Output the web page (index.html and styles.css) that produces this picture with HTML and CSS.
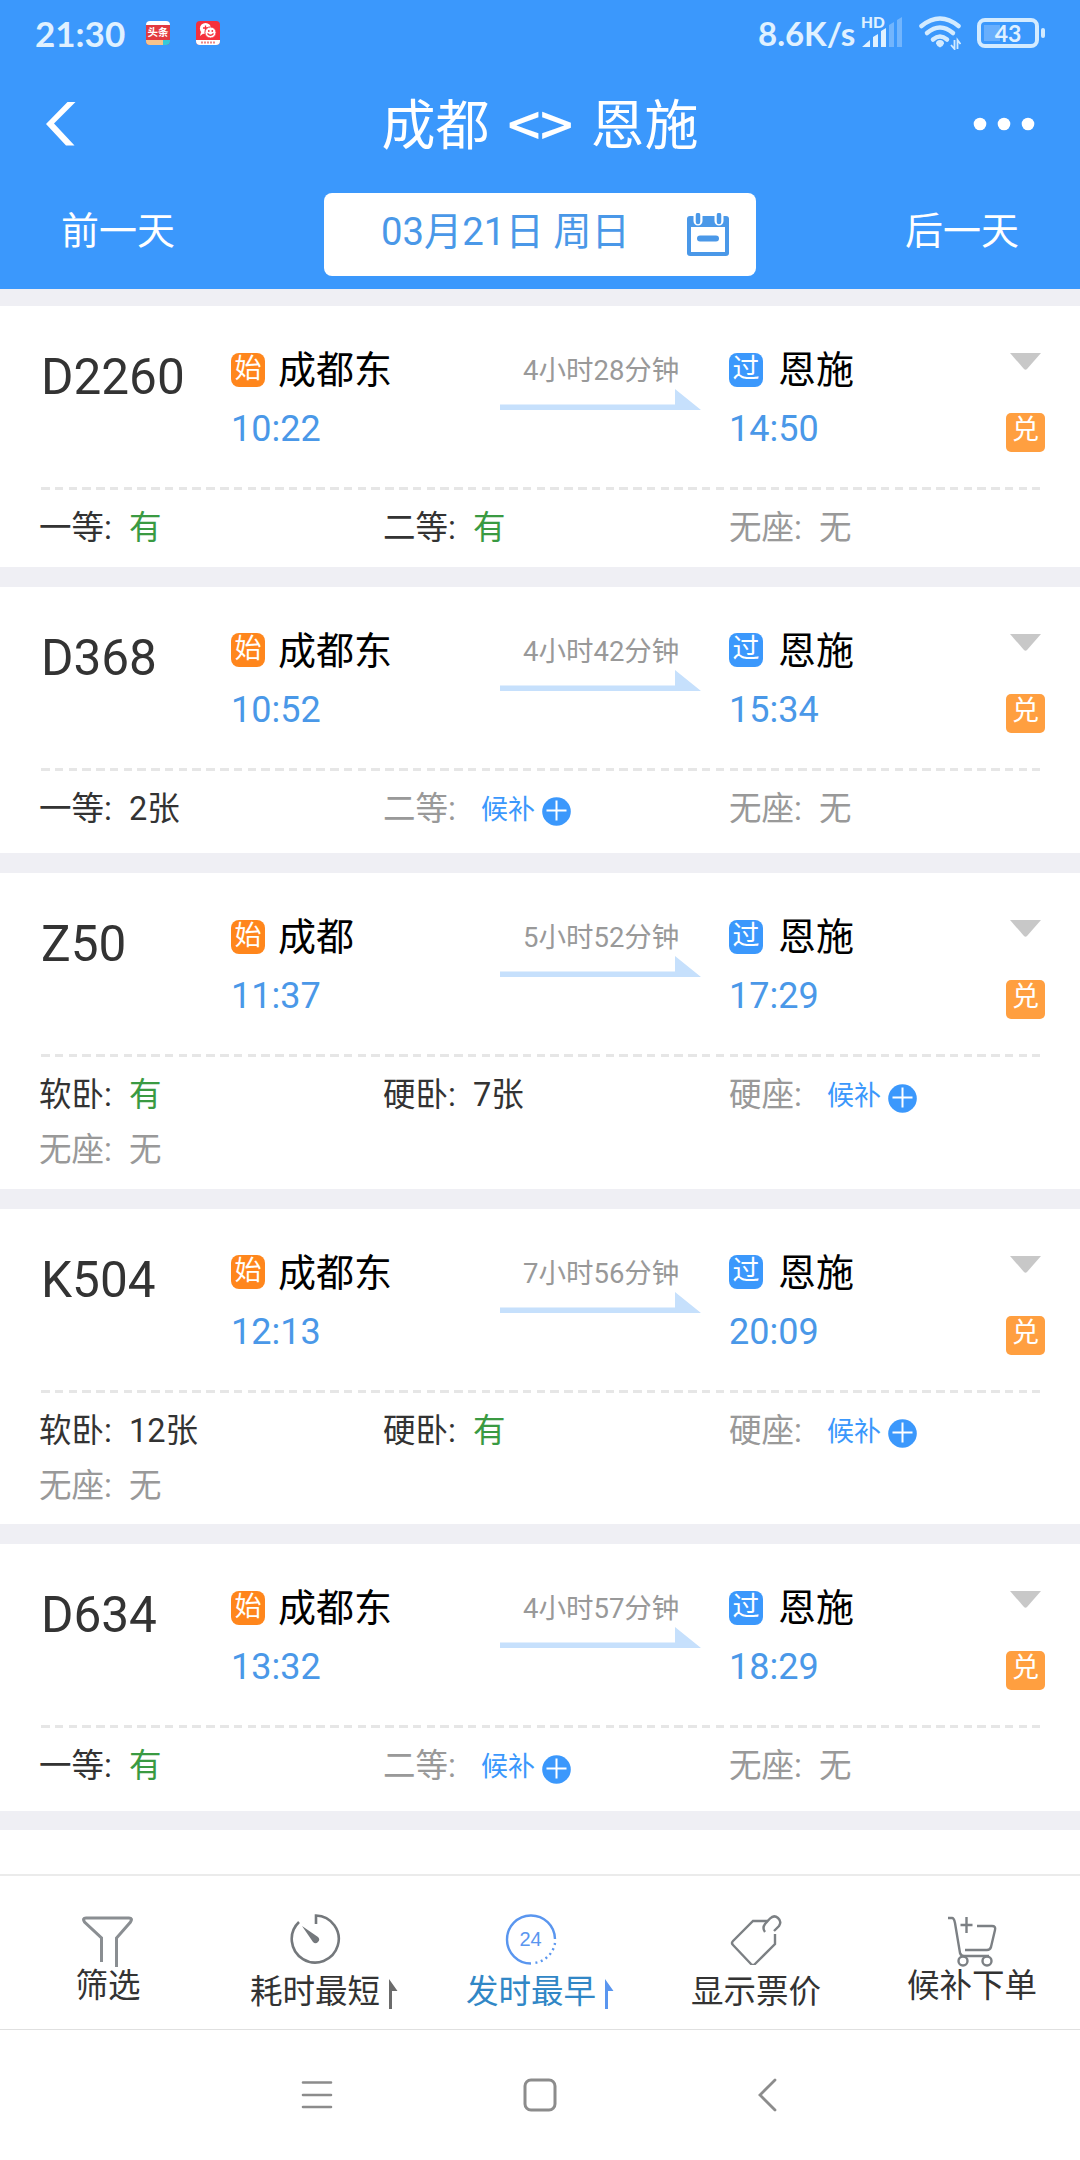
FILE: index.html
```html
<!DOCTYPE html>
<html lang="zh-CN">
<head>
  <meta charset="UTF-8">
  <meta name="viewport" content="width=device-width, initial-scale=1.0">
  <title>成都 - 恩施</title>
  <link rel="stylesheet" href="styles.css">
</head>
<body>

  <header class="header">
    <!-- status bar -->
    <div class="status">
      <span class="clock">21:30</span>
      <span class="app app-news"><b>头条</b><i></i></span>
      <span class="app app-chat">
        <svg width="24" height="24" viewBox="0 0 24 24">
          <rect y="19" width="24" height="5" fill="#fff"/>
          <circle cx="9.500" cy="7.500" r="5.600" fill="#fff"/>
          <path d="M5 11l-1 4 4-3z" fill="#fff"/>
          <path d="M9.500 4.500v5M7 7h5" stroke="#f5303c" stroke-width="1.300"/>
          <circle cx="14.500" cy="11.500" r="5.600" fill="#fff" stroke="#f5303c" stroke-width="1"/>
          <path d="M11.500 12.500q3 3.500 6 0" fill="none" stroke="#f5303c" stroke-width="1.300"/>
          <circle cx="12.800" cy="10" r=".9" fill="#f5303c"/>
          <circle cx="16.300" cy="10" r=".9" fill="#f5303c"/>
          <path d="M5 21.500h14" stroke="#e88" stroke-width="2" stroke-dasharray="2 1"/>
        </svg>
      </span>
      <span class="speed">8.6K/s</span>
      <span class="signal">
        <b>HD</b>
        <svg width="42" height="32" viewBox="0 0 42 32">
          <path d="M0 30l8-7v7zM11 20l5-3v13h-5zM19 14l5-3v19h-5z" fill="#e0f1ff"/>
          <path d="M27 8l5-3v25h-5zM35 3l5-3v30h-5z" fill="#72b5fd"/>
        </svg>
      </span>
      <svg class="wifi" width="42" height="34" viewBox="0 0 42 34">
        <g fill="none" stroke="#d3ebff" stroke-width="4.500" stroke-linecap="round">
          <path d="M2.500 10q18.500-15 37 0"/>
          <path d="M8 17q13-11 26 0"/>
          <path d="M14 23.500q7-6 14 0"/>
        </g>
        <path d="M17 27.500a4 3.500 0 0 1 8 0q-1 3-4 4-3-1-4-4z" fill="#d3ebff"/>
        <path d="M35.500 24v9l-3.500-4M38.500 33v-9l3 4" fill="none" stroke="#d3ebff" stroke-width="1.800"/>
      </svg>
      <span class="battery">43</span>
    </div>

    <div class="title-bar">
      <svg width="30" height="44" viewBox="0 0 30 44"><path d="M21.500 0h8L8 21.500 28.500 43.500H20L0 22z" fill="#fff"/></svg>
      <h1>成都<span>&lt;&gt;</span>恩施</h1>
      <svg width="62" height="14" viewBox="0 0 62 14" fill="#fff"><circle cx="7" cy="7" r="6.300"/><circle cx="31" cy="7" r="6.300"/><circle cx="55" cy="7" r="6.300"/></svg>
    </div>

    <div class="date-bar">
      <a class="day">前一天</a>
      <div class="date-box">
        <span>03月21日 周日</span>
        <svg width="42" height="43" viewBox="0 0 42 43">
          <path d="M3 3h36q3 0 3 3v34q0 3-3 3H3q-3 0-3-3V6q0-3 3-3z" fill="#4a98e8"/>
          <path d="M4 14h34v25H4z" fill="#fff"/>
          <path d="M11 0v8M32 0v8" stroke="#fff" stroke-width="9" stroke-linecap="round"/>
          <path d="M11 2v7M32 2v7" stroke="#4a98e8" stroke-width="4.500" stroke-linecap="round"/>
          <path d="M13 25.500h16" stroke="#4a98e8" stroke-width="6" stroke-linecap="round"/>
        </svg>
      </div>
      <a class="day">后一天</a>
    </div>
  </header>

  <main class="list" id="list"></main>

  <nav class="tabs">
    <div class="tab">
      <svg width="52" height="52" viewBox="0 0 52 52" fill="none" stroke="#8a8e92" stroke-width="3">
        <path d="M19.500 47V23L2.500 7Q0 3 4 3h43q4 0 1.500 4L34.500 23v29"/>
      </svg>
      <span>筛选</span>
    </div>
    <div class="tab tab-low">
      <div class="tab-sort">
        <svg width="52" height="52" viewBox="0 0 52 52" fill="none" stroke="#74787c" stroke-width="2.600">
          <path d="M27 11V2.500A23.500 23.500 0 1 1 10 9"/>
          <path d="M13 13l16 11a3.500 3.500 0 1 1-5 5z" fill="#74787c" stroke="none"/>
        </svg>
        <span>耗时最短</span>
      </div>
      <svg class="flag" width="9" height="30" viewBox="0 0 9 30" fill="#6b6b6b"><path d="M0 0l8.500 12H3v18H0z"/></svg>
    </div>
    <div class="tab tab-low active">
      <div class="tab-sort">
        <svg width="52" height="52" viewBox="0 0 52 52" fill="none" stroke="#5a96ef" stroke-width="2.400">
          <path d="M26 50.500A24 24 0 1 1 50 26"/>
          <path d="M50 30A24 24 0 0 1 29 50" stroke-dasharray="2 3.500"/>
          <text class="day-hours" x="25.500" y="33" text-anchor="middle">24</text>
        </svg>
        <span>发时最早</span>
      </div>
      <svg class="flag" width="9" height="30" viewBox="0 0 9 30" fill="#5a96ef"><path d="M0 0l8.500 12H3v18H0z"/></svg>
    </div>
    <div class="tab tab-low">
      <svg width="52" height="52" viewBox="0 0 52 52" fill="none" stroke="#7c8084" stroke-width="2.400">
        <path d="M38 8H23L3 28q-2 2 0 4l18 19q2 2 4 0l20-20V21"/>
        <path d="M35 19q-3-4 0-8l5-5.500q4-4 8-.5t1 8l-5 5"/>
      </svg>
      <span>显示票价</span>
    </div>
    <div class="tab">
      <svg width="52" height="52" viewBox="0 0 52 52" fill="none" stroke="#7c8084" stroke-width="2.400">
        <path d="M2 3h4q2 0 3 5l5 30q1 3 4 3h25"/>
        <path d="M31 11h15q4 0 3 4l-4 17q-1 3-4 3H19"/>
        <path d="M20.500 2v16M14.500 10h12"/>
        <circle cx="17" cy="46" r="4.500"/><circle cx="41" cy="46" r="4.500"/>
      </svg>
      <span>候补下单</span>
    </div>
  </nav>

  <footer class="sysnav">
    <svg width="32" height="34" viewBox="0 0 32 34" fill="none" stroke="#8c8c8c" stroke-width="2.600" stroke-linecap="round"><path d="M2 4.500h28M2 17h28M2 29h28"/></svg>
    <svg width="34" height="34" viewBox="0 0 34 34" fill="none" stroke="#8c8c8c" stroke-width="3"><rect x="2" y="2" width="30" height="30" rx="6"/></svg>
    <svg class="sys-back" width="22" height="34" viewBox="0 0 22 34" fill="none" stroke="#8c8c8c" stroke-width="2.800" stroke-linecap="round"><path d="M18 2L3 17l15 15"/></svg>
  </footer>

  <script>
    const trains = [
      { no: "D2260", from: "成都东", dep: "10:22", time: "4小时28分钟", arr: "14:50", seats: [["一等", "有"], ["二等", "有"], ["无座", "无"]] },
      { no: "D368", from: "成都东", dep: "10:52", time: "4小时42分钟", arr: "15:34", seats: [["一等", "2张"], ["二等", "候补"], ["无座", "无"]] },
      { no: "Z50", from: "成都", dep: "11:37", time: "5小时52分钟", arr: "17:29", seats: [["软卧", "有"], ["硬卧", "7张"], ["硬座", "候补"], ["无座", "无"]] },
      { no: "K504", from: "成都东", dep: "12:13", time: "7小时56分钟", arr: "20:09", seats: [["软卧", "12张"], ["硬卧", "有"], ["硬座", "候补"], ["无座", "无"]] },
      { no: "D634", from: "成都东", dep: "13:32", time: "4小时57分钟", arr: "18:29", seats: [["一等", "有"], ["二等", "候补"], ["无座", "无"]] }
    ];

    const plus = '<svg width="29" height="29" viewBox="0 0 29 29"><circle cx="14.500" cy="14.500" r="14.300" fill="#3b98fc"/><path d="M14.500 3.500v20M4.500 13.500h20" stroke="#fff" stroke-width="2"/></svg>';

    function seat([name, value]) {
      let cls = "";
      if (value === "有") cls = "yes";
      if (value === "无") cls = "none";
      if (value === "候补") cls = "none wait";
      return `<div class="seat ${cls}"><span class="label">${name}:</span><span class="value">${value}</span>${value === "候补" ? plus : ""}</div>`;
    }

    // a single row with a waitlist button is a little taller
    function isTall(seats) {
      return seats.length < 4 && seats.some(s => s[1] === "候补");
    }

    document.getElementById("list").innerHTML = trains.map(t => `
      <section class="card">
        <div class="info">
          <div class="no">${t.no}</div>
          <div class="stop">
            <div class="station"><span class="badge start">始</span>${t.from}</div>
            <div class="time">${t.dep}</div>
          </div>
          <div class="duration">
            <span>${t.time}</span>
            <svg width="201" height="22" viewBox="0 0 201 22"><path d="M0 15.500h175V0l26 21H0z" fill="#c6e0fc"/></svg>
          </div>
          <div class="stop">
            <div class="station"><span class="badge pass">过</span>恩施</div>
            <div class="time">${t.arr}</div>
          </div>
          <div class="side">
            <svg width="31" height="18" viewBox="0 0 31 18"><path d="M0 0h31L17 16q-1.500 1.500-3 0z" fill="#c8c8c8"/></svg>
            <span class="redeem">兑</span>
          </div>
        </div>
        <div class="seats${isTall(t.seats) ? " tall" : ""}">${t.seats.map(seat).join("")}</div>
      </section>`).join("");
  </script>

</body>
</html>
```

FILE: styles.css
```css
* {
  box-sizing: border-box;
}

body {
  margin: 0;
  height: 2160px;
  display: flex;
  flex-direction: column;
  overflow: hidden;
  background: #fff;
  font-family: Roboto, "Noto Sans CJK SC", sans-serif;
  color: #333;
}

svg {
  display: block;
  flex: none;
}

/* header */
.header {
  height: 289px;
  flex: none;
  background: #3b98fc;
  color: #fff;
}

.status {
  height: 66px;
  padding: 0 35px;
  display: flex;
  align-items: center;
  font-family: Lato, sans-serif;
  font-weight: 700;
  color: #e0f1ff;
}

.clock {
  width: 111px;
  font-size: 35px;
}

.app {
  width: 24px;
  height: 24px;
  margin-right: 26px;
  border-radius: 4px;
  overflow: hidden;
  background: #f5303c;
}

.app-news {
  display: flex;
  flex-direction: column;
  justify-content: space-between;
  border-top: 4px solid #fff;
  background: #e23a40;
}

.app-news b {
  font: 700 10.500px/14px "Noto Sans CJK SC", sans-serif;
  text-align: center;
  color: #fff;
}

.app-news i {
  height: 5px;
  background: linear-gradient(90deg, #f7c48c 70%, #35c9d8 70%);
}

.speed {
  margin-left: auto;
  font-size: 33px;
  width: 104px;
}

.signal {
  position: relative;
  width: 57px;
}

.signal b {
  position: absolute;
  top: -4px;
  left: -1px;
  font-size: 15.500px;
  line-height: 18px;
}

.battery {
  position: relative;
  width: 62px;
  height: 30px;
  margin: 0 6px 0 16px;
  border: 4px solid #d3ebff;
  border-radius: 8px;
  background: linear-gradient(#68affd, #68affd) 3px 3px / 16px 16px no-repeat;
  font-size: 23px;
  line-height: 23px;
  text-align: center;
}

.battery::after {
  content: "";
  position: absolute;
  right: -10px;
  top: 6px;
  width: 4px;
  height: 10px;
  border-radius: 2px;
  background: #d3ebff;
}

.title-bar {
  height: 116px;
  padding: 0 45px 0 46px;
  display: flex;
  align-items: center;
  justify-content: space-between;
}

.title-bar h1 {
  margin: 0;
  padding: 6px 0 0 31px;
  font-size: 54px;
  line-height: 80px;
  font-weight: 400;
}

.title-bar h1 span {
  margin: 0 18px;
  font-family: "Noto Sans CJK SC", sans-serif;
  font-size: 58px;
  font-weight: 500;
  line-height: 60px;
  letter-spacing: -0.5px;
  vertical-align: -2px;
}

.date-bar {
  padding: 11px 61px 0;
  display: flex;
  justify-content: space-between;
}

.day {
  font-size: 38px;
  line-height: 76px;
}

.date-box {
  width: 432px;
  height: 83px;
  padding: 0 27px 0 57px;
  display: flex;
  justify-content: space-between;
  align-items: center;
  border-radius: 8px;
  background: #fff;
  color: #4a98e8;
  font-size: 38.300px;
}

.date-box span {
  padding-bottom: 13px;
}

/* train list */
.list {
  height: 1585px;
  flex: none;
  padding-top: 17px;
  background: linear-gradient(#efeff4 1541px, #fff 1541px);
}

.card {
  padding: 0 40px;
  margin-bottom: 20px;
  background: #fff;
}

.info {
  height: 184px;
  display: grid;
  grid-template-columns: 190px 270px 228px 238px 1fr;
  background: repeating-linear-gradient(90deg, #e6e6e6 0 8.500px, #fff 8.500px 13.770px) 1px 100% / 999px 3px no-repeat;
}

.no {
  padding: 41px 0 0 1px;
  font-size: 49.500px;
  line-height: 60px;
}

.stop {
  padding-top: 39px;
}

.station {
  display: flex;
  align-items: center;
  height: 50px;
  font-size: 38px;
  line-height: 50px;
  color: #000;
}

.badge {
  width: 34px;
  height: 34px;
  margin: -1px 13px 0 1px;
  border-radius: 8px;
  font-size: 27px;
  line-height: 32px;
  text-align: center;
  color: #fff;
}

.start {
  background: #ff861c;
}

.pass {
  margin-right: 15px;
  background: #3b98fc;
}

.time {
  padding: 12px 0 0 1px;
  font-size: 36px;
  line-height: 44px;
  color: #4a98e8;
}

.duration {
  padding-top: 45px;
  display: flex;
  flex-direction: column;
  font-size: 27.500px;
  line-height: 40px;
  color: #999;
}

.duration svg {
  margin-top: -2px;
}

.duration span {
  padding-left: 23px;
}

.side {
  padding: 47px 0 0 40px;
  display: flex;
  flex-direction: column;
  align-items: center;
}

.redeem {
  width: 39px;
  height: 39px;
  margin-top: 42px;
  border-radius: 5px;
  background: #ff9f40;
  color: #fff;
  font-size: 27px;
  line-height: 35px;
  text-align: center;
}

.seats {
  display: grid;
  grid-template-columns: 344px 346px 1fr;
  grid-auto-rows: 49px;
  row-gap: 6px;
  margin-left: -1px;
  padding: 14px 0 13.500px;
}

.seats.tall {
  padding-bottom: 19.500px;
}

.seat {
  display: flex;
  align-items: center;
  font-size: 32.500px;
  line-height: 49px;
}

.label {
  width: 90px;
}

.yes .value {
  color: #3a9a42;
}

.none {
  color: #999;
}

.wait .value {
  width: 69px;
  padding: 2px 0 0 8px;
  font-size: 27px;
  color: #3b98fc;
}

.wait svg {
  margin-top: 5px;
}

/* bottom tabs */
.tabs {
  height: 156px;
  flex: none;
  display: grid;
  grid-template-columns: repeat(5, 216px);
  border-top: 2px solid #ebebeb;
  border-bottom: 1px solid #e0e0e0;
}

.tab {
  padding-top: 39px;
  display: flex;
  flex-direction: column;
  align-items: center;
  font-size: 32.500px;
  line-height: 38px;
}

.tab-low {
  padding-top: 37px;
}

.tab-low > span,
.tab-sort span {
  margin-top: 8px;
}

.tab-sort {
  display: flex;
  flex-direction: column;
  align-items: center;
}

.tab:has(.flag) {
  flex-direction: row;
  align-items: flex-start;
  justify-content: center;
}

.flag {
  margin: 66px 0 0 9px;
}

.active {
  color: #3187c6;
}

.day-hours {
  font-family: "Liberation Sans", sans-serif;
  font-size: 20px;
  fill: #5a96ef;
  stroke: none;
}

/* system navigation */
.sysnav {
  height: 130px;
  flex: none;
  padding-left: 301px;
  display: flex;
  align-items: center;
  gap: 190px;
}

.sys-back {
  margin-left: 10px;
}
```
